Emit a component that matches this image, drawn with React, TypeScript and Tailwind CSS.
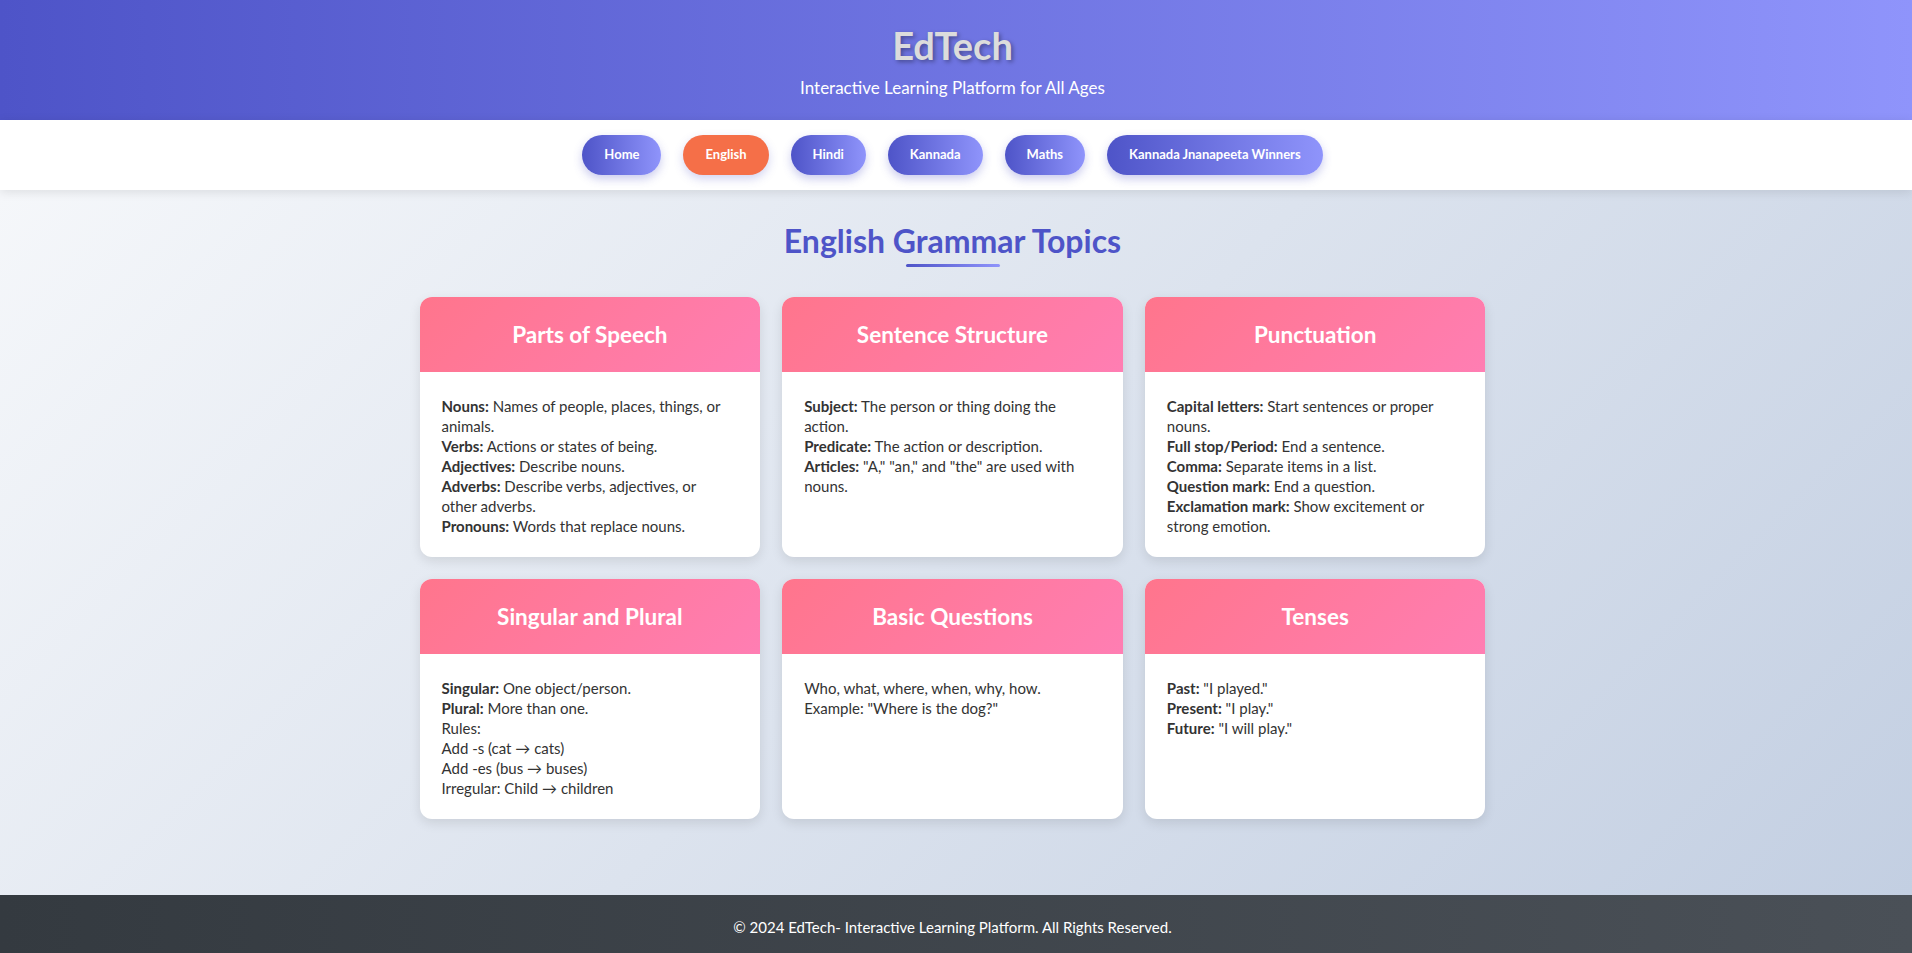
import React from "react";

type Item = { b?: string; t: string };
type Card = { title: string; items: Item[] };

const cards: Card[] = [
  {
    title: "Parts of Speech",
    items: [
      { b: "Nouns:", t: " Names of people, places, things, or animals." },
      { b: "Verbs:", t: " Actions or states of being." },
      { b: "Adjectives:", t: " Describe nouns." },
      { b: "Adverbs:", t: " Describe verbs, adjectives, or other adverbs." },
      { b: "Pronouns:", t: " Words that replace nouns." },
    ],
  },
  {
    title: "Sentence Structure",
    items: [
      { b: "Subject:", t: " The person or thing doing the action." },
      { b: "Predicate:", t: " The action or description." },
      { b: "Articles:", t: ' "A," "an," and "the" are used with nouns.' },
    ],
  },
  {
    title: "Punctuation",
    items: [
      { b: "Capital letters:", t: " Start sentences or proper nouns." },
      { b: "Full stop/Period:", t: " End a sentence." },
      { b: "Comma:", t: " Separate items in a list." },
      { b: "Question mark:", t: " End a question." },
      { b: "Exclamation mark:", t: " Show excitement or strong emotion." },
    ],
  },
  {
    title: "Singular and Plural",
    items: [
      { b: "Singular:", t: " One object/person." },
      { b: "Plural:", t: " More than one." },
      { t: "Rules:" },
      { t: "Add -s (cat \u2192 cats)" },
      { t: "Add -es (bus \u2192 buses)" },
      { t: "Irregular: Child \u2192 children" },
    ],
  },
  {
    title: "Basic Questions",
    items: [
      { t: "Who, what, where, when, why, how." },
      { t: 'Example: "Where is the dog?"' },
    ],
  },
  {
    title: "Tenses",
    items: [
      { b: "Past:", t: ' "I played."' },
      { b: "Present:", t: ' "I play."' },
      { b: "Future:", t: ' "I will play."' },
    ],
  },
];

const navItems = ["Home", "English", "Hindi", "Kannada", "Maths", "Kannada Jnanapeeta Winners"];

export default function App() {
  return (
    <div
      className="min-h-screen flex flex-col"
      style={{ fontFamily: '"Lato", "Noto Sans", sans-serif' }}
    >
      <header className="h-[120px] pr-[7px] bg-[linear-gradient(90deg,#4e54c8,#8f94fb)] flex flex-col items-center pt-[22px]">
        <h1 className="text-[38px] leading-[46px] font-bold text-[#dcdcdc] [text-shadow:2px_2px_4px_rgba(0,0,0,0.35)]">
          EdTech
        </h1>
        <p className="mt-[8px] text-[17px] leading-[24px] text-white">
          Interactive Learning Platform for All Ages
        </p>
      </header>

      <nav className="h-[70px] pr-[7px] bg-white shadow-[0_2px_10px_rgba(0,0,0,0.1)] flex items-center justify-center gap-[22px] relative z-10">
        {navItems.map((n) => (
          <a
            key={n}
            className={
              n === "English"
                ? "h-[40px] px-[22px] rounded-[22px] flex items-center text-[13px] font-bold text-white bg-[#f56f48] shadow-[0_4px_10px_rgba(78,84,200,0.25)]"
                : "h-[40px] px-[22px] rounded-[22px] flex items-center text-[13px] font-bold text-white bg-[linear-gradient(90deg,#4e54c8,#8f94fb)] shadow-[0_4px_10px_rgba(78,84,200,0.3)]"
            }
          >
            {n}
          </a>
        ))}
      </nav>

      <main className="flex-1 pr-[7px] bg-[linear-gradient(135deg,#f5f7fa,#c3cfe2)] pt-[30px] pb-[76px] flex flex-col items-center">
        <h2 className="text-[32px] leading-[42px] font-bold text-[#4e54c8]">English Grammar Topics</h2>
        <div className="mt-[2px] w-[94px] h-[3px] rounded-full bg-[linear-gradient(90deg,#4e54c8,#8f94fb)]" />

        <div className="mt-[30px] w-[1066px] grid grid-cols-3 gap-[22px]">
          {cards.map((c) => (
            <div
              key={c.title}
              className="bg-white rounded-[12px] overflow-hidden shadow-[0_4px_12px_rgba(0,0,0,0.1)] flex flex-col"
            >
              <div className="h-[75px] bg-[linear-gradient(135deg,#ff758c,#ff7eb3)] flex items-center justify-center">
                <h3 className="text-[22.5px] font-bold text-white">{c.title}</h3>
              </div>
              <div className="pl-[22px] pr-[30px] pt-[24px] pb-[21px] text-[15px] leading-[20px] text-[#333]">
                {c.items.map((it, i) => (
                  <div key={i}>
                    {it.b && <strong className="font-bold">{it.b}</strong>}
                    {it.t}
                  </div>
                ))}
              </div>
            </div>
          ))}
        </div>
      </main>

      <footer className="h-[64px] pr-[7px] bg-[linear-gradient(90deg,#343a40,#4a5057)] flex items-center justify-center text-white text-[15px]">
        © 2024 EdTech- Interactive Learning Platform. All Rights Reserved.
      </footer>
    </div>
  );
}
